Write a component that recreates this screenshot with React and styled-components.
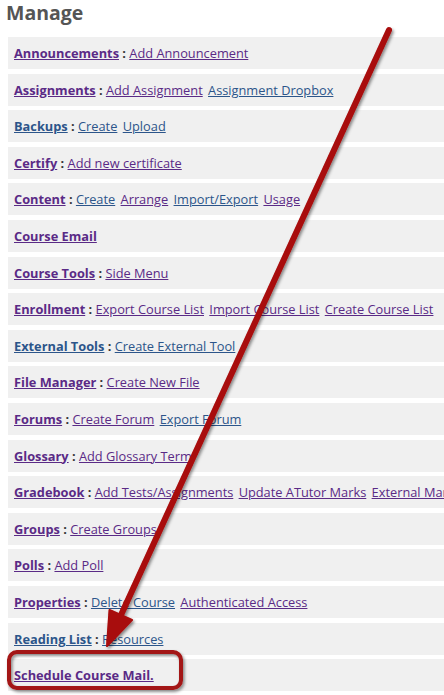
import React from "react";
import styled, { createGlobalStyle } from "styled-components";

const Global = createGlobalStyle`
  html, body { margin: 0; padding: 0; background: #fff; overflow: hidden; }
  body { font-family: "Open Sans", "Liberation Sans", sans-serif; }
`;

const Page = styled.div`
  position: relative;
  width: 444px;
  height: 695px;
  overflow: hidden;
`;

const Content = styled.div`
  padding: 0 0 0 8px;
  width: 600px;
`;

const Title = styled.h2`
  margin: 0 0 0 -2px;
  padding-top: 0;
  height: 37px;
  line-height: 26px;
  font-size: 19.5px;
  font-weight: 700;
  color: #555;
`;

const List = styled.ul`
  list-style: none;
  margin: 0;
  padding: 0;
  display: flex;
  flex-direction: column;
  gap: 4.6px;
`;

const Row = styled.li`
  background: #f0f0f0;
  height: 32px;
  line-height: 32px;
  padding-left: 6px;
  font-size: 12.8px;
  white-space: nowrap;
  color: #333;
`;

const Label = styled.a`
  font-weight: 700;
  color: ${(p) => (p.$v ? "#5a2a86" : "#2c558a")};
  text-decoration: underline;
`;

const Sep = styled.span`
  font-weight: 700;
  color: #333;
`;

const Item = styled.a`
  color: ${(p) => (p.$v ? "#5a2a86" : "#2c558a")};
  text-decoration: underline;
  margin-right: 2px;
`;

const Overlay = styled.svg`
  position: absolute;
  left: 0;
  top: 0;
  pointer-events: none;
`;

const rows = [
  ["Announcements", 1, [["Add Announcement", 1]]],
  ["Assignments", 1, [["Add Assignment", 1], ["Assignment Dropbox", 0]]],
  ["Backups", 0, [["Create", 0], ["Upload", 0]]],
  ["Certify", 1, [["Add new certificate", 1]]],
  ["Content", 1, [["Create", 0], ["Arrange", 1], ["Import/Export", 0], ["Usage", 1]]],
  ["Course Email", 1, []],
  ["Course Tools", 1, [["Side Menu", 1]]],
  ["Enrollment", 1, [["Export Course List", 1], ["Import Course List", 1], ["Create Course List", 1]]],
  ["External Tools", 0, [["Create External Tool", 0]]],
  ["File Manager", 1, [["Create New File", 1]]],
  ["Forums", 1, [["Create Forum", 1], ["Export Forum", 0]]],
  ["Glossary", 1, [["Add Glossary Term", 1]]],
  ["Gradebook", 1, [["Add Tests/Assignments", 1], ["Update ATutor Marks", 1], ["External Marks", 1]]],
  ["Groups", 1, [["Create Groups", 1]]],
  ["Polls", 1, [["Add Poll", 1]]],
  ["Properties", 1, [["Delete Course", 0], ["Authenticated Access", 1]]],
  ["Reading List", 0, [["Resources", 0]]],
  ["Schedule Course Mail.", 1, []],
];

export default function App() {
  return (
    <Page>
      <Global />
      <Content>
        <Title>Manage</Title>
        <List>
          {rows.map(([label, v, items]) => (
            <Row key={label}>
              <Label href="#" $v={!!v}>{label}</Label>
              {items.length > 0 && <Sep> : </Sep>}
              {items.map(([t, iv], i) => (
                <React.Fragment key={t}>
                  {i > 0 && " "}
                  <Item href="#" $v={!!iv}>{t}</Item>
                </React.Fragment>
              ))}
            </Row>
          ))}
        </List>
      </Content>
      <Overlay width="444" height="695" viewBox="0 0 444 695">
        <defs>
          <filter id="sh" x="-20%" y="-20%" width="140%" height="140%">
            <feDropShadow dx="1.5" dy="2" stdDeviation="1.5" floodColor="#000" floodOpacity="0.45" />
          </filter>
        </defs>
        <g filter="url(#sh)">
          <line x1="389" y1="30" x2="121" y2="615" stroke="#a80808" strokeWidth="6" strokeLinecap="round" />
          <polygon points="107,646 109.5,610 132,620" fill="#a80808" stroke="#a80808" strokeWidth="2" strokeLinejoin="round" />
          <rect x="9" y="652" width="172" height="36" rx="8" fill="none" stroke="#a31212" strokeWidth="4" />
        </g>
      </Overlay>
    </Page>
  );
}
